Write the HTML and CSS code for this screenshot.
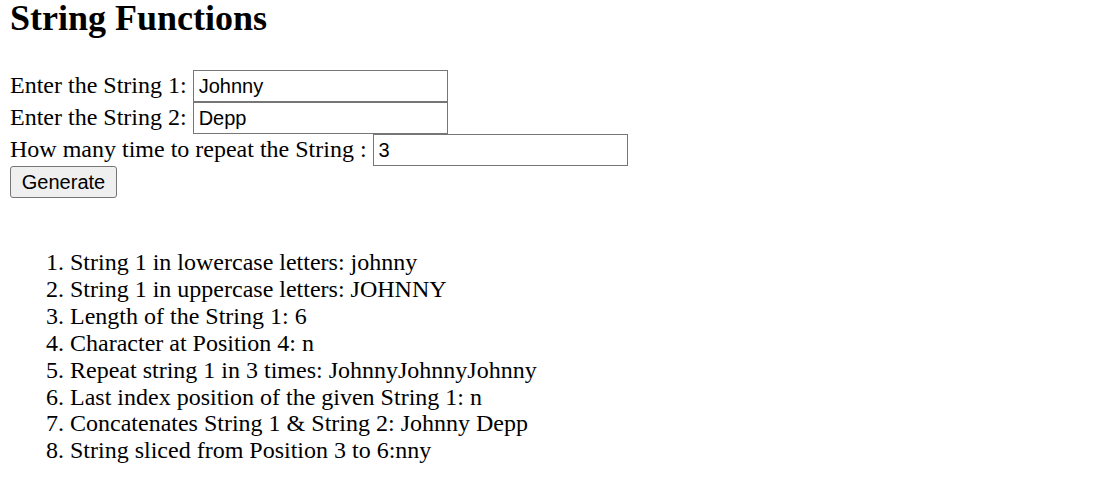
FILE: index.html
```html
<!DOCTYPE html>
<html>
<head>
<meta charset="utf-8">
<title>String Functions</title>
<link rel="stylesheet" href="styles.css">
</head>
<body>
<div class="page">
  <h2 class="title">String Functions</h2>
  <form class="form">
    <div class="row"><label class="label">Enter the String 1:</label><input class="field" type="text" value="Johnny"></div>
    <div class="row"><label class="label">Enter the String 2:</label><input class="field" type="text" value="Depp"></div>
    <div class="row"><label class="label">How many time to repeat the String :</label><input class="field" type="text" value="3"></div>
    <div class="row"><button class="btn" type="button">Generate</button></div>
  </form>
  <ol class="results">
    <li>String 1 in lowercase letters: johnny</li>
    <li>String 1 in uppercase letters: JOHNNY</li>
    <li>Length of the String 1: 6</li>
    <li>Character at Position 4: n</li>
    <li>Repeat string 1 in 3 times: JohnnyJohnnyJohnny</li>
    <li>Last index position of the given String 1: n</li>
    <li>Concatenates String 1 &amp; String 2: Johnny Depp</li>
    <li>String sliced from Position 3 to 6:nny</li>
  </ol>
</div>
</body>
</html>
```
FILE: styles.css
```css
html, body {
  margin: 0;
  padding: 0;
  background: #ffffff;
}
.page {
  padding: 0 10px;
  font-family: "Liberation Serif", "Times New Roman", serif;
  font-size: 24px;
  color: #000000;
}
.title {
  margin: 0 0 34px 0;
  font-size: 36px;
  line-height: 36px;
  font-weight: bold;
}
.form {
  display: flex;
  flex-direction: column;
}
.row {
  display: flex;
  align-items: center;
  height: 32px;
  gap: 6px;
}
.label {
  line-height: 26.86px;
  padding-bottom: 2px;
  white-space: nowrap;
}
.field {
  box-sizing: border-box;
  width: 255px;
  height: 32px;
  margin: 0;
  padding: 0 5px;
  border: 1px solid #767676;
  border-radius: 0;
  font-family: "Liberation Sans", Arial, sans-serif;
  font-size: 20px;
  color: #000000;
  background: #ffffff;
  outline: none;
}
.btn {
  box-sizing: border-box;
  height: 32px;
  width: 107px;
  margin: 0;
  padding: 0;
  border: 1px solid #767676;
  border-radius: 3px;
  background: #efefef;
  font-family: "Liberation Sans", Arial, sans-serif;
  font-size: 20px;
  color: #000000;
}
.results {
  margin: 51px 0 0 0;
  padding-left: 60px;
  line-height: 26.9px;
}
```
